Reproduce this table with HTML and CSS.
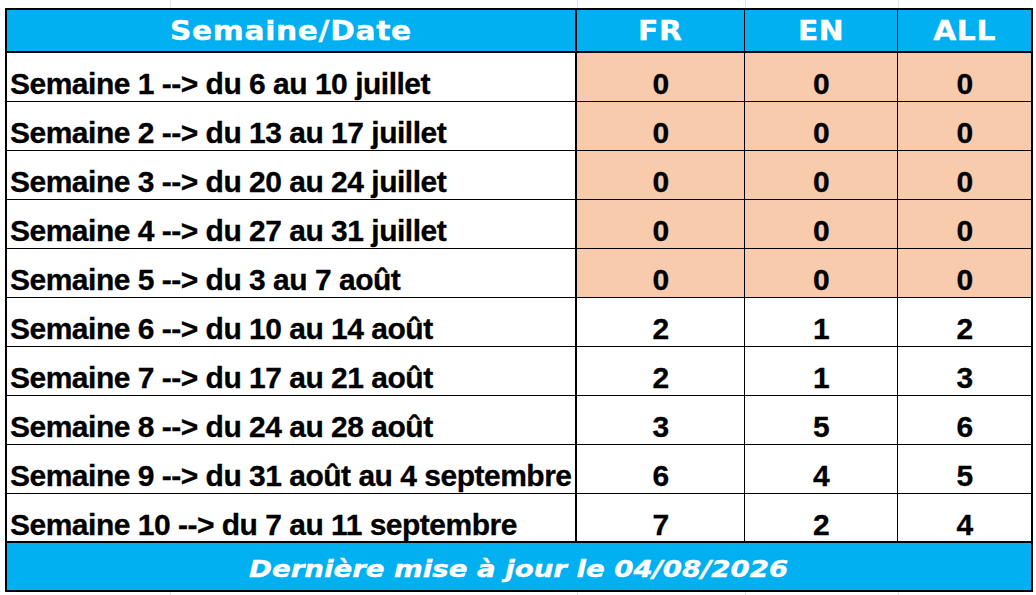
FILE: index.html
```html
<!DOCTYPE html>
<html lang="fr">
<head>
<meta charset="utf-8">
<title>Semaine/Date</title>
<link rel="stylesheet" href="styles.css">
</head>
<body>
<div class="sheet">
  <div class="row head">
    <div class="cell date"><span class="wide">Semaine/Date</span></div>
    <div class="cell fr"><span class="wide">FR</span></div>
    <div class="cell en"><span class="wide">EN</span></div>
    <div class="cell all"><span class="wide">ALL</span></div>
  </div>
  <div class="row pending">
    <div class="cell date">Semaine 1 --&gt; du 6 au 10 juillet</div>
    <div class="cell fr">0</div><div class="cell en">0</div><div class="cell all">0</div>
  </div>
  <div class="row pending">
    <div class="cell date">Semaine 2 --&gt; du 13 au 17 juillet</div>
    <div class="cell fr">0</div><div class="cell en">0</div><div class="cell all">0</div>
  </div>
  <div class="row pending">
    <div class="cell date">Semaine 3 --&gt; du 20 au 24 juillet</div>
    <div class="cell fr">0</div><div class="cell en">0</div><div class="cell all">0</div>
  </div>
  <div class="row pending">
    <div class="cell date">Semaine 4 --&gt; du 27 au 31 juillet</div>
    <div class="cell fr">0</div><div class="cell en">0</div><div class="cell all">0</div>
  </div>
  <div class="row pending">
    <div class="cell date">Semaine 5 --&gt; du 3 au 7 août</div>
    <div class="cell fr">0</div><div class="cell en">0</div><div class="cell all">0</div>
  </div>
  <div class="row">
    <div class="cell date">Semaine 6 --&gt; du 10 au 14 août</div>
    <div class="cell fr">2</div><div class="cell en">1</div><div class="cell all">2</div>
  </div>
  <div class="row">
    <div class="cell date">Semaine 7 --&gt; du 17 au 21 août</div>
    <div class="cell fr">2</div><div class="cell en">1</div><div class="cell all">3</div>
  </div>
  <div class="row">
    <div class="cell date">Semaine 8 --&gt; du 24 au 28 août</div>
    <div class="cell fr">3</div><div class="cell en">5</div><div class="cell all">6</div>
  </div>
  <div class="row">
    <div class="cell date">Semaine 9 --&gt; du 31 août au 4 septembre</div>
    <div class="cell fr">6</div><div class="cell en">4</div><div class="cell all">5</div>
  </div>
  <div class="row last">
    <div class="cell date">Semaine 10 --&gt; du 7 au 11 septembre</div>
    <div class="cell fr">7</div><div class="cell en">2</div><div class="cell all">4</div>
  </div>
  <div class="foot"><span class="wide-foot">Dernière mise à jour le 04/08/2026</span></div>
</div>
</body>
</html>
```

FILE: styles.css
```css
* { box-sizing: border-box; }

html, body {
  margin: 0;
  padding: 0;
}

body {
  width: 1036px;
  height: 595px;
  overflow: hidden;
  background-color: #ffffff;
  background-image:
    linear-gradient(to right, transparent 170px, #e2e2e2 170px, #e2e2e2 171px, transparent 171px),
    linear-gradient(to right, transparent 577px, #e2e2e2 577px, #e2e2e2 578px, transparent 578px),
    linear-gradient(to right, transparent 745px, #e2e2e2 745px, #e2e2e2 746px, transparent 746px),
    linear-gradient(to right, transparent 898px, #e2e2e2 898px, #e2e2e2 899px, transparent 899px);
  font-family: "Liberation Sans", Arial, sans-serif;
  color: #000;
  padding: 8px 0 0 5px;
}

.sheet {
  width: 1028px;
  border: 2px solid #000;
  background: #fff;
}

.row {
  display: grid;
  grid-template-columns: 570px 168px 153px 133px;
  height: 49px;
  border-bottom: 1px solid #000;
}

.cell {
  font-weight: bold;
  font-size: 30px;
  letter-spacing: -0.5px;
  line-height: 34px;
  padding-top: 14px;
  white-space: nowrap;
  overflow: hidden;
  text-align: center;
  -webkit-text-stroke: 0.3px #000;
}

.cell.date {
  text-align: left;
  padding-left: 3px;
  border-right: 2px solid #000;
}

.cell.fr,
.cell.en {
  border-right: 1px solid #000;
}

.pending .fr,
.pending .en,
.pending .all {
  background: #f8cbad;
}

.row.head {
  height: 43px;
  border-bottom: 2px solid #000;
  background: #00b0f0;
}

.head .cell {
  color: #fff;
  font-family: "DejaVu Sans", "Liberation Sans", sans-serif;
  font-size: 27px;
  letter-spacing: 0.6px;
  line-height: 33px;
  padding-top: 4px;
  text-align: center;
  padding-left: 0;
  -webkit-text-stroke: 0.4px #fff;
}

.head .cell.date { text-align: center; }

.wide {
  display: inline-block;
  transform: scaleX(1.1);
}

.row.last {
  border-bottom: 2px solid #000;
}

.foot {
  height: 47px;
  background: #00b0f0;
  color: #fff;
  text-align: center;
  font-family: "DejaVu Sans", "Liberation Sans", sans-serif;
  font-weight: bold;
  font-style: italic;
  font-size: 23px;
  line-height: 27px;
  padding-top: 13px;
  white-space: nowrap;
  -webkit-text-stroke: 0.4px #fff;
}

.wide-foot {
  display: inline-block;
  transform: scaleX(1.2);
}
```
